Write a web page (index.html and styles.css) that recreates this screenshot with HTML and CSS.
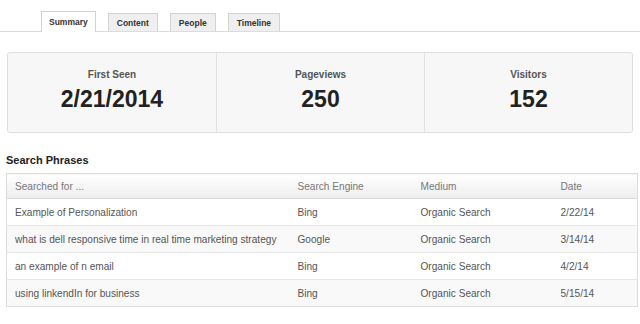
FILE: index.html
```html
<!DOCTYPE html>
<html>
<head>
<meta charset="utf-8">
<link rel="stylesheet" href="styles.css">
</head>
<body>
<nav class="tabs">
  <div class="tab active">Summary</div>
  <div class="tab">Content</div>
  <div class="tab">People</div>
  <div class="tab">Timeline</div>
</nav>
<section class="stats">
  <div class="stat">
    <div class="stat-label">First Seen</div>
    <div class="stat-value">2/21/2014</div>
  </div>
  <div class="stat">
    <div class="stat-label">Pageviews</div>
    <div class="stat-value">250</div>
  </div>
  <div class="stat">
    <div class="stat-label">Visitors</div>
    <div class="stat-value">152</div>
  </div>
</section>
<h2 class="section-title">Search Phrases</h2>
<table class="phrases">
  <thead>
    <tr>
      <th class="c1">Searched for ...</th>
      <th class="c2">Search Engine</th>
      <th class="c3">Medium</th>
      <th class="c4">Date</th>
    </tr>
  </thead>
  <tbody>
    <tr><td>Example of Personalization</td><td>Bing</td><td>Organic Search</td><td>2/22/14</td></tr>
    <tr><td>what is dell responsive time in real time marketing strategy</td><td>Google</td><td>Organic Search</td><td>3/14/14</td></tr>
    <tr><td>an example of n email</td><td>Bing</td><td>Organic Search</td><td>4/2/14</td></tr>
    <tr><td>using linkendIn for business</td><td>Bing</td><td>Organic Search</td><td>5/15/14</td></tr>
  </tbody>
</table>
</body>
</html>
```

FILE: styles.css
```css
* { box-sizing: border-box; }
html, body { margin: 0; padding: 0; background: #fff; }
body {
  font-family: "Liberation Sans", Arial, Helvetica, sans-serif;
  color: #555;
  width: 640px;
  height: 324px;
  overflow: hidden;
}
.tabs {
  display: flex;
  align-items: flex-end;
  gap: 12px;
  height: 32px;
  padding: 11px 0 0 41px;
  border-bottom: 1px solid #dcdcdc;
}
.tab {
  height: 18px;
  padding: 0 8px;
  display: flex;
  align-items: center;
  justify-content: center;
  font-size: 8.5px;
  font-weight: bold;
  color: #333;
  background: #efefef;
  border: 1px solid #d2d2d2;
  border-bottom: none;
}
.tab.active {
  height: 21px;
  margin-bottom: -1px;
  padding: 0 7px;
  background: #fff;
  border-color: #d2d2d2;
}
.stats {
  display: grid;
  grid-template-columns: 1fr 1fr 1fr;
  margin: 20px 7px 0 7px;
  height: 81px;
  background: #f7f7f7;
  border: 1px solid #dedede;
  border-radius: 3px;
}
.stat {
  display: flex;
  flex-direction: column;
  align-items: center;
  padding-top: 16px;
}
.stat + .stat { border-left: 1px solid #e2e2e2; }
.stat-label {
  font-size: 10px;
  line-height: 12px;
  font-weight: bold;
  color: #555;
}
.stat-value {
  margin-top: 5px;
  font-size: 23px;
  line-height: 26px;
  font-weight: bold;
  color: #222;
}
.section-title {
  margin: 20px 0 6px 6px;
  font-size: 11px;
  line-height: 14px;
  font-weight: bold;
  color: #222;
}
.phrases {
  margin-left: 6px;
  width: 631px;
  border-collapse: collapse;
  table-layout: fixed;
  font-size: 10.1px;
  border: 1px solid #dcdcdc;
}
.phrases th {
  height: 25px;
  text-align: left;
  font-weight: normal;
  color: #777;
  padding: 0 0 0 8px;
  background: linear-gradient(#ffffff, #ededed);
  border-bottom: 1px solid #dcdcdc;
}
.phrases .c1 { width: 283px; }
.phrases .c2 { width: 123px; }
.phrases .c3 { width: 140px; }
.phrases .c4 { width: 85px; }
.phrases td {
  height: 27px;
  padding: 0 0 0 8px;
  color: #555;
  border-top: 1px solid #e6e6e6;
  white-space: nowrap;
}
.phrases tbody tr:nth-child(even) td { background: #f9f9f9; }
```
